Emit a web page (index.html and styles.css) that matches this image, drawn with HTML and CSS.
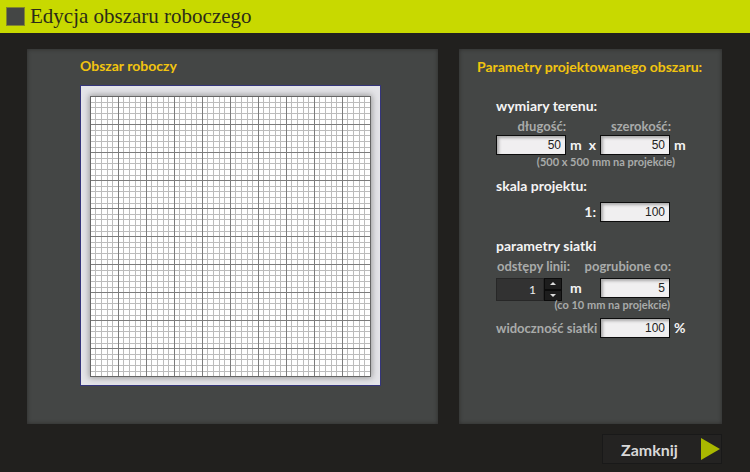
FILE: index.html
```html
<!DOCTYPE html>
<html lang="pl">
<head>
  <meta charset="UTF-8" />
  <meta name="viewport" content="width=device-width, initial-scale=1.0"/>
  <title>Edycja obszaru roboczego</title>
  <link rel="stylesheet" href="styles.css">
</head>
<body>
  <header class="titlebar">
    <span class="titlebar-icon"></span>
    <h1>Edycja obszaru roboczego</h1>
  </header>

  <main class="panels">
    <section class="panel workspace">
      <h2>Obszar roboczy</h2>
      <div class="canvas">
        <svg class="sheet" width="281" height="281" viewBox="0 0 281 281" shape-rendering="crispEdges">
          <defs>
            <pattern id="grid" width="28" height="28" patternUnits="userSpaceOnUse">
              <rect width="28" height="28" fill="#fff" />
              <path d="M5.5 0V28M11.5 0V28M17.5 0V28M22.5 0V28M0 6.5H28M0 11.5H28M0 17.5H28M0 23.5H28" stroke="#bcbcbc" />
              <path d="M.5 0V28M0 .5H28" stroke="#7c7c7c" />
            </pattern>
          </defs>
          <rect width="281" height="281" fill="url(#grid)" />
          <rect x=".5" y=".5" width="280" height="280" fill="none" stroke="#666" />
        </svg>
      </div>
    </section>

    <section class="panel params">
      <h2>Parametry projektowanego obszaru:</h2>
      <form id="paramsForm">
        <h3>wymiary terenu:</h3>
        <div class="row labels">
          <label for="length">długość:</label>
          <label class="second" for="width">szerokość:</label>
        </div>
        <div class="row">
          <input type="text" id="length" name="length" value="50" />
          <span class="unit between"><span>m</span><span>x</span></span>
          <input type="text" id="width" name="width" value="50" />
          <span class="unit">m</span>
        </div>
        <p class="note">(500 x 500 mm na projekcie)</p>

        <h3>skala projektu:</h3>
        <div class="row scale">
          <label class="wide" for="scale">1:</label>
          <input type="text" id="scale" name="scale" value="100" />
        </div>

        <h3>parametry siatki</h3>
        <div class="row grid-labels">
          <label class="spacing" for="spacing">odstępy linii:</label>
          <label class="second" for="bold">pogrubione co:</label>
        </div>
        <div class="row">
          <div class="stepper">
            <input type="text" id="spacing" name="spacing" value="1" />
            <div class="arrows">
              <button type="button" id="up" aria-label="Zwiększ"><svg width="6" height="3" viewBox="0 0 6 3"><path d="M0 3L3 0L6 3Z" fill="#ddd" /></svg></button>
              <button type="button" id="down" aria-label="Zmniejsz"><svg width="6" height="3" viewBox="0 0 6 3"><path d="M0 0L3 3L6 0Z" fill="#ddd" /></svg></button>
            </div>
          </div>
          <span class="unit between">m</span>
          <input type="text" id="bold" name="bold" value="5" />
        </div>
        <p class="note grid-note">(co 10 mm na projekcie)</p>
        <div class="row visibility">
          <label class="wide" for="visibility">widoczność siatki</label>
          <input type="text" id="visibility" name="visibility" value="100" />
          <span class="unit">%</span>
        </div>
      </form>
    </section>
  </main>

  <footer>
    <button type="button" class="close">
      Zamknij
      <svg width="19" height="22" viewBox="0 0 19 22"><path d="M0 0L19 11L0 22Z" fill="#a9b800" /></svg>
    </button>
  </footer>
</body>
</html>
```
FILE: styles.css
```css
* { box-sizing: border-box; }
body {
  margin: 0;
  background-color: #21201e;
  color: #f4f4f4;
  font-family: Lato, sans-serif;
  font-size: 13px;
}
h1, h2, h3, p { margin: 0; }
.titlebar {
  display: flex;
  align-items: center;
  gap: 5px;
  height: 33px;
  padding: 0 6px;
  background-color: #c8d900;
  color: #2b2b18;
}
.titlebar-icon {
  width: 19px;
  height: 19px;
  background-color: #444645;
  border: 1px solid #81852f;
}
h1 {
  font-family: "Liberation Serif", serif;
  font-size: 21px;
  font-weight: normal;
}
.panels {
  display: grid;
  grid-template-columns: 411fr 263fr;
  gap: 21px;
  padding: 16px 28px 10px 27px;
}
.panel {
  padding: 8px 18px 38px;
  background-color: #444645;
  box-shadow: inset 0 0 4px #2c2c2b;
}
.workspace {
  padding-top: 7px;
  padding-left: 53px;
}
h2 {
  color: #f2c40f;
  font-size: 14px;
  font-weight: bold;
  line-height: 20px;
  white-space: nowrap;
}
.canvas {
  width: 301px;
  margin-top: 9px;
  padding: 10px 9px 8px;
  background-color: #e4e4e8;
  border: 1px solid #35357a;
}
.sheet {
  display: block;
  box-shadow: 0 0 6px 1px #999;
}
form {
  margin-top: 19px;
  padding-left: 19px;
}
h3 {
  font-size: 14px;
  font-weight: bold;
  line-height: 20px;
}
.note + h3 { margin-top: 7px; }
.row {
  display: flex;
  align-items: flex-start;
  height: 20px;
  line-height: 20px;
}
.labels { height: 19px; }
.grid-labels {
  height: 22px;
}
label {
  width: 70px;
  color: #a9abaa;
  font-weight: bold;
  text-align: right;
  white-space: nowrap;
}
.second { width: 105px; }
.scale {
  margin: 6px 0 14px;
}
.wide {
  width: 104px;
  padding-right: 4px;
}
.scale .wide { color: #f4f4f4; font-size: 14px; }
.spacing { width: 74px; }
.spacing + .second { width: 101px; }
input {
  width: 70px;
  height: 20px;
  padding: 0 4px;
  border: 1px solid #0c0c0c;
  background-color: #f0eff0;
  box-shadow: inset 2px 2px 3px #aaa;
  color: #222;
  font-family: "Liberation Sans", Arial, sans-serif;
  font-size: 12px;
  text-align: right;
}
.unit {
  padding-left: 4px;
  font-size: 14px;
  font-weight: bold;
}
.between {
  display: flex;
  justify-content: space-between;
  width: 34px;
  padding-right: 4px;
}
.stepper {
  display: flex;
  width: 66px;
  margin-right: 4px;
}
.stepper input {
  width: 48px;
  height: 23px;
  padding-right: 7px;
  border-color: #272727;
  background-color: #323232;
  box-shadow: none;
  color: #eee;
  font-family: Lato, sans-serif;
}
.arrows {
  display: grid;
  width: 18px;
  height: 23px;
}
.arrows button {
  display: grid;
  place-items: center;
  padding: 0;
  border: 1px solid #0b0b0b;
  background-color: #1d1d1d;
}
.note {
  width: 179px;
  color: #a9abaa;
  font-size: 11px;
  font-weight: bold;
  line-height: 14px;
  text-align: right;
}
.grid-note { width: 174px; }
.visibility { margin-top: 6px; }
footer {
  display: flex;
  justify-content: flex-end;
  padding: 0 28px 8px;
}
.close {
  display: flex;
  align-items: center;
  justify-content: space-between;
  width: 120px;
  height: 30px;
  padding: 0 1px 0 18px;
  border: 1px solid #191919;
  background-color: #242322;
  color: #d8d8d8;
  font-family: Lato, sans-serif;
  font-size: 16px;
  font-weight: bold;
  cursor: pointer;
}
```
